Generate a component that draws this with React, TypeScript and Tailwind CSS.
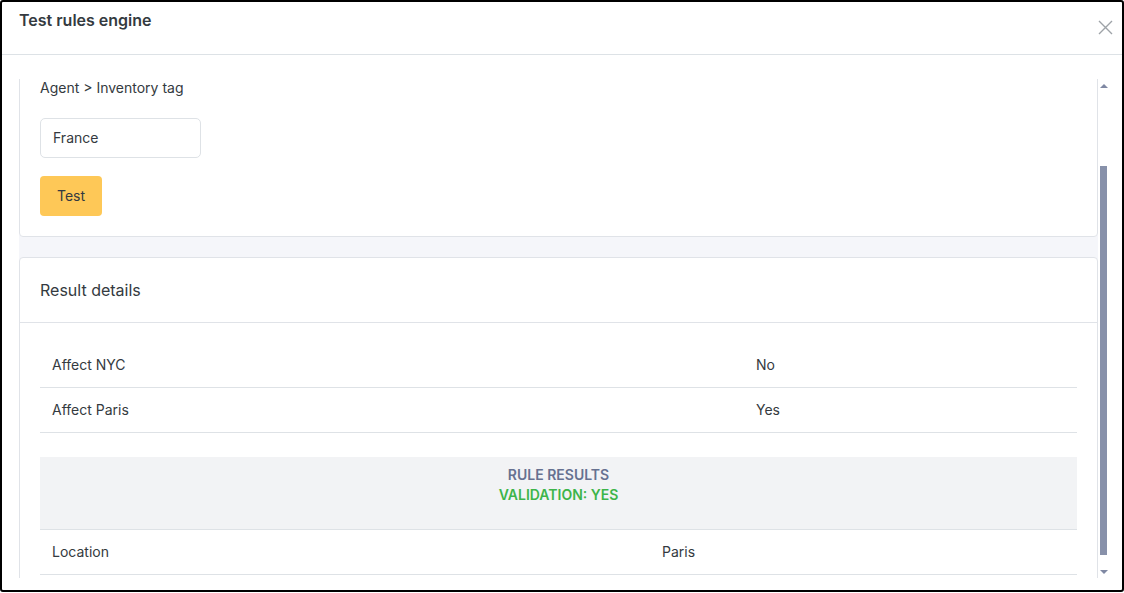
import React from "react";

// Scrolled modal: "Test rules engine"
const firstRows = [
  { label: "Affect NYC", value: "No" },
  { label: "Affect Paris", value: "Yes" },
];

function CloseIcon() {
  return (
    <svg width="15" height="15" viewBox="0 0 15 15" fill="none">
      <path d="M1 1L14 14M14 1L1 14" stroke="#9ea3a8" strokeWidth="1.4" />
    </svg>
  );
}

function FakeScrollbar() {
  return (
    <div className="w-[11px] flex flex-col items-center">
      <div className="mt-[5px] w-0 h-0 border-x-[4px] border-x-transparent border-b-[4px] border-b-[#7f88a3]" />
      <div className="flex-1 w-full flex justify-center pt-[78px]">
        <div className="w-[7px] h-[389px] bg-[#8891aa]" />
      </div>
      <div className="mb-[4px] w-0 h-0 border-x-[4px] border-x-transparent border-t-[4px] border-t-[#7f88a3]" />
    </div>
  );
}

export default function App() {
  return (
    <div className="w-[1124px] h-[593px] bg-white font-['Inter','Noto_Sans',sans-serif] text-[#343a40]">
      <div className="h-[592px] border-2 border-black rounded-[3px] flex flex-col overflow-hidden">
        {/* ── Header ─────────────────────────── */}
        <div className="h-[53px] shrink-0 border-b border-[#dde2e6] flex justify-between items-start pl-[17px] pr-[9px] pt-[6px]">
          <h2 className="text-base leading-6 font-semibold text-[#343a40]">Test rules engine</h2>
          <button className="mt-[12px]">
            <CloseIcon />
          </button>
        </div>

        {/* ── Body (scrolled) ─────────────────── */}
        <div className="flex-1 flex pl-[17px] pr-[13px] pt-[24px] pb-[12px] min-h-0">
          <div className="flex-1 overflow-hidden bg-[#f5f6fa]">
            <div className="-mt-[21px] flex flex-col gap-5">
              {/* Test form card */}
              <div className="bg-white border border-[#e0e3e8] rounded-[4px] px-5 pt-[19px] pb-5">
                <p className="text-sm leading-5">Agent &gt; Inventory tag</p>
                <div className="mt-5 h-10 w-[161px] border border-[#dee2e6] rounded-[5px] px-3 flex items-center text-sm">
                  France
                </div>
                <button className="mt-[18px] h-10 px-[17px] bg-[#fec857] rounded-[4px] text-sm text-[#343a40]">
                  Test
                </button>
              </div>

              {/* Result details card */}
              <div className="bg-white border border-[#e0e3e8] rounded-[4px]">
                <div className="px-5 py-5 border-b border-[#e0e3e8] text-base leading-6">Result details</div>
                <div className="px-5 pt-5 pb-5">
                  {firstRows.map((row) => (
                    <div key={row.label} className="grid grid-cols-[704px_1fr] border-b border-[#dee2e6] text-sm leading-5">
                      <div className="px-3 py-3">{row.label}</div>
                      <div className="px-3 py-3">{row.value}</div>
                    </div>
                  ))}

                  <div className="mt-6 bg-[#f2f3f5] border-b border-[#dee2e6] pt-2 pb-6 text-center text-sm leading-5 font-semibold">
                    <div className="text-[#667190]">RULE RESULTS</div>
                    <div className="text-[#3db54a]">VALIDATION: YES</div>
                  </div>
                  <div className="grid grid-cols-[610px_1fr] border-b border-[#dee2e6] text-sm leading-5">
                    <div className="px-3 py-3">Location</div>
                    <div className="px-3 py-3">Paris</div>
                  </div>
                </div>
              </div>
            </div>
          </div>
          <FakeScrollbar />
        </div>
      </div>
    </div>
  );
}
